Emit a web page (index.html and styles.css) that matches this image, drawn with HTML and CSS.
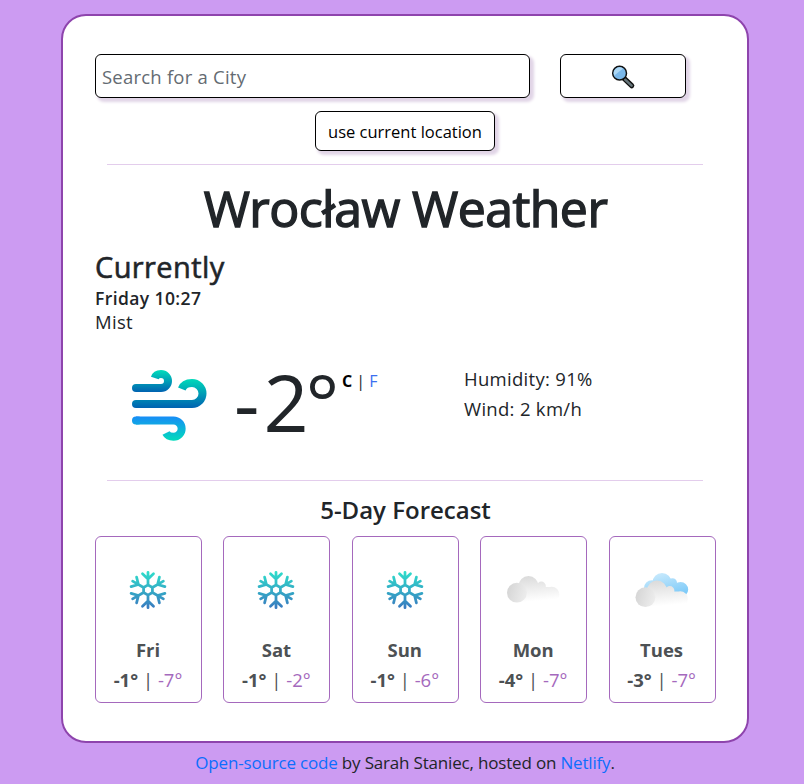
FILE: index.html
```html
<!DOCTYPE html>
<html lang="en">
<head>
<meta charset="utf-8">
<title>Weather</title>
<link rel="stylesheet" href="styles.css">
</head>
<body>
<svg class="defs" aria-hidden="true">
  <defs>
    <linearGradient id="ice" gradientUnits="userSpaceOnUse" x1="0" y1="-19" x2="0" y2="19"><stop offset="0" stop-color="#2ee0cb"/><stop offset="1" stop-color="#3a78c0"/></linearGradient>
    <linearGradient id="gray" x1="0" y1="0" x2="0.15" y2="1"><stop offset="0" stop-color="#d9d9d9"/><stop offset="1" stop-color="#ffffff"/></linearGradient>
    <linearGradient id="puff" x1="0" y1="0" x2="1" y2="0.3"><stop offset="0" stop-color="#d3d3d3"/><stop offset="1" stop-color="#ebebeb"/></linearGradient>
    <linearGradient id="sky" x1="0" y1="0" x2="0.5" y2="1"><stop offset="0" stop-color="#d3eefd"/><stop offset="1" stop-color="#80cbf8"/></linearGradient>
    <symbol id="snow" viewBox="-26.5 -26.5 53 53">
      <g fill="none" stroke="url(#ice)" stroke-width="2.7" stroke-linecap="round" stroke-linejoin="round">
        <path d="M0-5V-17.4M-5.4-16L0-10.8L5.4-16M0 5V17.4M-5.4 16L0 10.8L5.4 16M4.33-2.5L15.1-8.7M11.2-12.7L9.4-5.4L16.6-3.3M-4.33-2.5L-15.1-8.7M-11.2-12.7L-9.4-5.4L-16.6-3.3M4.33 2.5L15.1 8.7M11.2 12.7L9.4 5.4L16.6 3.3M-4.33 2.5L-15.1 8.7M-11.2 12.7L-9.4 5.4L-16.6 3.3M0-5L4.33-2.5V2.5L0 5L-4.33 2.5V-2.5Z"/>
      </g>
    </symbol>
    <g id="cloud">
      <path fill="url(#gray)" d="M11.8 23a10 10 0 0 1 20 0a10 10 0 0 1-20 0ZM30 23.2a4.6 4.6 0 0 1 9.2 0a4.6 4.6 0 0 1-9.2 0ZM37.3 31.5a7.7 7.7 0 0 1 15.4 0a7.7 7.7 0 0 1-15.4 0ZM10 27L15 24H41L46 24V39.2H10Z"/>
      <circle cx="10.2" cy="29.7" r="9.9" fill="url(#puff)"/>
    </g>
    <symbol id="cloudy" viewBox="0 0 54 54"><use href="#cloud" transform="translate(.7 0)"/></symbol>
    <symbol id="broken" viewBox="0 0 54 54">
      <path fill="url(#sky)" d="M17.5 19.5a9.5 9.5 0 0 1 19 0a9.5 9.5 0 0 1-19 0ZM33 19.8a4.5 4.5 0 0 1 9 0a4.5 4.5 0 0 1-9 0ZM38 26.5a7.6 7.6 0 0 1 15.2 0a7.6 7.6 0 0 1-15.2 0ZM9 25a7.8 7.8 0 0 1 15.6 0a7.8 7.8 0 0 1-15.6 0ZM18 21H45V32H18Z"/>
      <use href="#cloud" transform="translate(.2 4.5)"/>
    </symbol>
  </defs>
</svg>
<main class="card">
  <form class="search">
    <input class="field" type="text" placeholder="Search for a City" aria-label="City">
    <button class="btn find" type="button" aria-label="Search">
      <svg width="26" height="26" viewBox="0 0 26 26"><path d="M13.8 14.2L21.7 21.7" stroke="#101010" stroke-width="5.2" stroke-linecap="round"/><path d="M15.2 15.6L21.6 21.6" stroke="#66757a" stroke-width="2.6" stroke-linecap="round"/><circle cx="9.6" cy="9.2" r="6.9" fill="#7ab8ea" stroke="#111" stroke-width="1.5"/><path d="M4.3 11.6A5.8 5.8 0 0 1 13 4.5Z" fill="#add8f5"/></svg>
    </button>
  </form>
  <button class="btn locate" type="button">use current location</button>
  <hr class="rule">
  <h1>Wrocław Weather</h1>
  <h2>Currently</h2>
  <p class="time">Friday 10:27</p>
  <p class="desc">Mist</p>
  <section class="now">
    <svg class="wind" width="80" height="76" viewBox="0 0 80 76" fill="none" stroke-width="8">
      <defs>
        <linearGradient id="w1" gradientUnits="userSpaceOnUse" x1="0" y1="2" x2="0" y2="24"><stop offset="0" stop-color="#00ddbb"/><stop offset="1" stop-color="#0062b1"/></linearGradient>
        <linearGradient id="w2" gradientUnits="userSpaceOnUse" x1="0" y1="11" x2="0" y2="40"><stop offset="0" stop-color="#00d9ba"/><stop offset="1" stop-color="#0062b1"/></linearGradient>
        <linearGradient id="w3" gradientUnits="userSpaceOnUse" x1="0" y1="48" x2="0" y2="73"><stop offset="0" stop-color="#188bf8"/><stop offset="1" stop-color="#00dcbb"/></linearGradient>
      </defs>
      <g stroke="url(#w1)"><path d="M6 20H31A7 7 0 0 0 31 6Q26 6 24.8 10"/><path d="M6 20H8" stroke-linecap="round"/></g>
      <g stroke="url(#w2)"><path d="M6 36H62A10.5 10.5 0 0 0 62 15Q54 15 51.8 21"/><path d="M6 36H8" stroke-linecap="round"/></g>
      <g stroke="url(#w3)"><path d="M6 52.5H43.5A8 8 0 0 1 43.5 68.8Q38 68.8 36 65"/><path d="M6 52.5H8" stroke-linecap="round"/></g>
    </svg>
    <div class="temp">-<span class="digit">2°</span></div>
    <div class="units"><b>C</b> | <a>F</a></div>
    <div class="stats"><p>Humidity: 91%</p><p>Wind: 2 km/h</p></div>
  </section>
  <hr class="rule">
  <h3>5-Day Forecast</h3>
  <section class="days">
    <article class="day"><svg width="54" height="54"><use href="#snow"/></svg><b>Fri</b><p><b>-1°</b> | <i>-7°</i></p></article>
    <article class="day"><svg width="54" height="54"><use href="#snow"/></svg><b>Sat</b><p><b>-1°</b> | <i>-2°</i></p></article>
    <article class="day"><svg width="54" height="54"><use href="#snow"/></svg><b>Sun</b><p><b>-1°</b> | <i>-6°</i></p></article>
    <article class="day"><svg width="54" height="54"><use href="#cloudy"/></svg><b>Mon</b><p><b>-4°</b> | <i>-7°</i></p></article>
    <article class="day"><svg width="54" height="54"><use href="#broken"/></svg><b>Tues</b><p><b>-3°</b> | <i>-7°</i></p></article>
  </section>
</main>
<footer><a>Open-source code</a> by Sarah Staniec, hosted on <a>Netlify</a>.</footer>
</body>
</html>
```
FILE: styles.css
```css
* { box-sizing: border-box; }
body { margin: 0; height: 784px; padding: 14px 55px 0 61px; overflow: hidden; background: #cc9bf2; color: #212529; font: 400 18.5px/24px "Open Sans", "Noto Sans", sans-serif; }
h1, h2, h3, p, hr { margin: 0; }
b { font-weight: 700; }
.defs { position: absolute; width: 0; height: 0; }
.card { height: 729px; padding: 38px 31px 0 32px; background: #fff; border: 2px solid #8e44ad; border-radius: 25px; }
.search { display: flex; gap: 30px; }
.field, .btn { background: #fff; border: 1px solid #000; border-radius: 6px; box-shadow: 3px 3px 3px 1px #e1d5e7; font: inherit; color: #000; }
.field { width: 435px; height: 44px; padding: 0 6px; letter-spacing: .22px; }
.field::placeholder { color: #646b72; opacity: 1; }
.find { width: 126px; height: 44px; padding: 2px 0 0; display: flex; align-items: center; justify-content: center; }
.locate { display: block; width: 180px; height: 40px; margin: 13px auto 0 220px; padding: 1px 0 0; font-size: 16.5px; white-space: nowrap; }
.rule { height: 1px; border: 0; background: #e3cdec; margin: 13px 13px 0 12px; }
h1 { margin-top: 13px; height: 60px; text-align: center; font-size: 50px; line-height: 60px; font-weight: 400; -webkit-text-stroke: 1.4px; letter-spacing: -.55px; white-space: nowrap; }
h2 { margin-top: 10px; height: 37px; font-size: 29px; line-height: 37px; font-weight: 400; -webkit-text-stroke: .6px; letter-spacing: .4px; }
.time { margin-top: 1px; font-weight: 600; font-size: 17.5px; letter-spacing: .4px; }
.desc { letter-spacing: .3px; }
.now { display: flex; height: 99px; margin-top: 34px; padding-left: 35px; }
.temp { width: 108px; margin-left: 24px; font-size: 79px; line-height: 67px; white-space: nowrap; }
.digit { margin-left: 4px; letter-spacing: -3px; }
.units { width: 122px; font-size: 16px; line-height: 27px; white-space: nowrap; }
.units b { color: #000; }
.units a { color: #3b6ff0; }
.wind { flex: none; }
a { color: #0d6efd; }
.stats { line-height: 30px; margin-top: -4px; letter-spacing: .3px; }
h3 { margin-top: 13px; height: 31px; font-size: 24px; line-height: 31px; text-align: center; font-weight: 600; }
.days { display: grid; grid-template-columns: repeat(5, 107px); justify-content: space-between; margin: 11px .4px 0 0; }
.day { height: 167px; border: 1px solid #a569bd; border-radius: 6px; display: flex; flex-direction: column; align-items: center; padding: 26px 1px 0 0; color: #4d5154; }
.day svg { flex: none; }
.day > b { margin-top: 18px; line-height: 30px; font-size: 18.5px; }
.day p { line-height: 30px; white-space: nowrap; }
.day i { color: #a569bd; font-style: normal; }
footer { text-align: center; margin-top: 8px; font-size: 17px; letter-spacing: -.18px; white-space: nowrap; }
```
